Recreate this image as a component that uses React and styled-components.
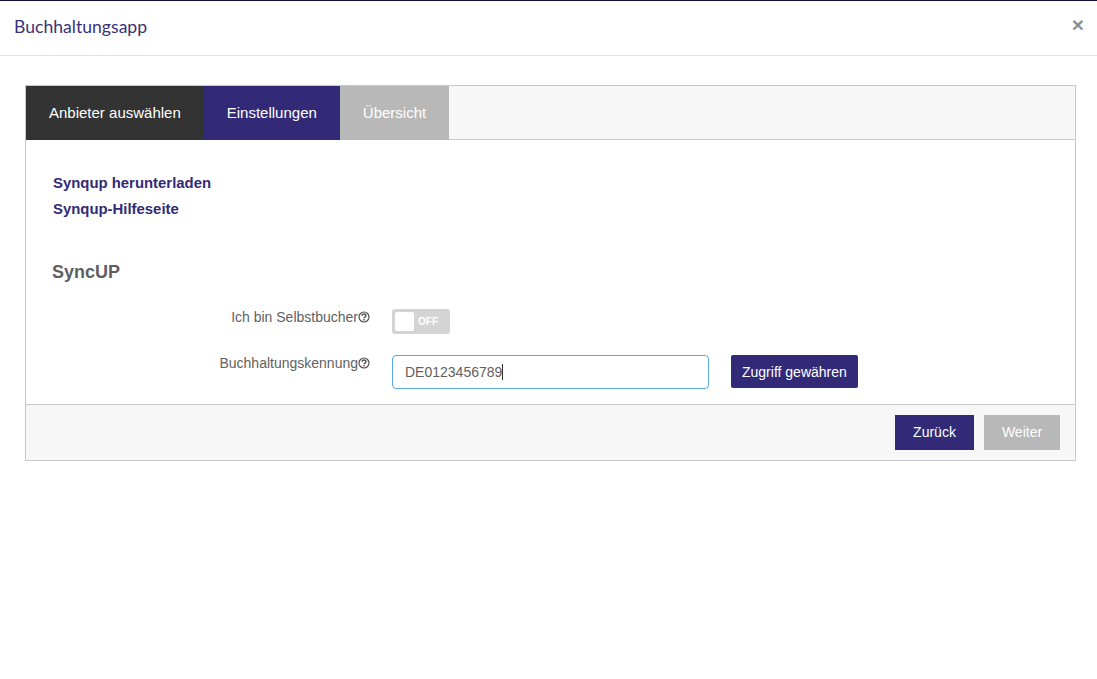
import React from "react";
import styled, { createGlobalStyle } from "styled-components";

const GlobalStyle = createGlobalStyle`
  html, body {
    margin: 0;
    padding: 0;
    background: #fff;
    font-family: "Liberation Sans", Arial, sans-serif;
  }
  * {
    box-sizing: border-box;
  }
`;

const Page = styled.div`
  width: 100%;
  height: 679px;
  overflow: hidden;
  border-top: 1px solid #14103a;
  background: #fff;
`;

const ModalHeader = styled.header`
  height: 55px;
  padding: 0 14px;
  display: flex;
  align-items: center;
  justify-content: space-between;
  border-bottom: 1px solid #e5e5e5;
`;

const ModalTitle = styled.h4`
  margin: 0 0 3px;
  font-family: Lato, sans-serif;
  font-size: 17.6px;
  font-weight: 400;
  color: #3a3278;
`;

const CloseButton = styled.span`
  font-family: "Liberation Sans", Arial, sans-serif;
  font-size: 21px;
  font-weight: 700;
  line-height: 1;
  color: #8f8f8f;
  margin: 0 -1px 8px 0;
`;

const ModalBody = styled.div`
  padding: 29px 21px 0 25px;
`;

const Wizard = styled.section`
  border: 1px solid #c8c8c8;
`;

const TabBar = styled.nav`
  display: flex;
  height: 54px;
  background: #f7f7f7;
  border-bottom: 1px solid #c8c8c8;
`;

const Tab = styled.div`
  display: flex;
  align-items: center;
  margin-bottom: -1px;
  padding: 0 23px 1px;
  font-size: 15px;
  color: #fff;
  background: ${(p) => p.$bg};
`;

const Content = styled.div`
  padding: 30px 27px 0 27px;
  height: 264px;
`;

const DocLink = styled.a`
  display: block;
  font-size: 14.9px;
  font-weight: 700;
  line-height: 26px;
  color: #332a77;
`;

const SectionTitle = styled.h3`
  margin: 40px 0 27px -1px;
  font-size: 18px;
  font-weight: 700;
  line-height: 20px;
  color: #5f5f5f;
`;

const FormRow = styled.div`
  display: flex;
  align-items: flex-start;
  margin-bottom: ${(p) => p.$gap}px;
`;

const Label = styled.label`
  width: 317px;
  flex: none;
  display: flex;
  justify-content: flex-end;
  align-items: center;
  height: 16px;
  font-size: 14px;
  color: #5f5f5f;
`;

const HelpIcon = styled.svg`
  width: 12px;
  height: 12px;
  flex: none;
`;

const Toggle = styled.div`
  margin-left: 22px;
  width: 58px;
  height: 25px;
  padding: 3px;
  border-radius: 3px;
  background: #d4d4d4;
  display: flex;
  align-items: center;
  gap: 4px;
`;

const ToggleKnob = styled.span`
  width: 19px;
  height: 19px;
  border-radius: 2px;
  background: #fff;
`;

const ToggleText = styled.span`
  font-size: 10px;
  font-weight: 700;
  color: #fff;
`;

const TextField = styled.div`
  margin-left: 22px;
  width: 317px;
  height: 34px;
  padding: 0 12px;
  display: flex;
  align-items: center;
  border: 1px solid #5aa9e6;
  border-radius: 4px;
  font-size: 14px;
  color: #5f5f5f;
`;

const Caret = styled.span`
  width: 1px;
  height: 16px;
  background: #333;
`;

const GrantButton = styled.button`
  margin-left: 22px;
  height: 33px;
  padding: 0 11px;
  border: 0;
  border-radius: 2px;
  background: #332a77;
  color: #fff;
  font-family: inherit;
  font-size: 14px;
`;

const Footer = styled.footer`
  height: 56px;
  padding: 10px 15px 0 0;
  display: flex;
  justify-content: flex-end;
  gap: 10px;
  background: #f7f7f7;
  border-top: 1px solid #c8c8c8;
`;

const FooterButton = styled.button`
  width: ${(p) => p.$w}px;
  height: 35px;
  padding: 0 0 2px;
  border: 0;
  background: ${(p) => (p.disabled ? "#b8b8b8" : "#332a77")};
  color: #fff;
  font-family: inherit;
  font-size: 14px;
`;

const Help = () => (
  <HelpIcon viewBox="0 0 12 12" fill="none" stroke="#4f4f4f">
    <circle cx="6" cy="6" r="5" strokeWidth="1.2" />
    <path d="M4.1 4.8c0-2.4 3.8-2.4 3.8-.1 0 1.4-1.9 1.3-1.9 2.6" strokeWidth="1.4" />
    <path d="M6 8.1v1.3" strokeWidth="1.4" />
  </HelpIcon>
);

export default function App() {
  return (
    <>
      <GlobalStyle />
      <Page>
        <ModalHeader>
          <ModalTitle>Buchhaltungsapp</ModalTitle>
          <CloseButton>×</CloseButton>
        </ModalHeader>
        <ModalBody>
          <Wizard>
            <TabBar>
              <Tab $bg="#333333">Anbieter auswählen</Tab>
              <Tab $bg="#332a77">Einstellungen</Tab>
              <Tab $bg="#b8b8b8">Übersicht</Tab>
            </TabBar>
            <Content>
              <DocLink>Synqup herunterladen</DocLink>
              <DocLink>Synqup-Hilfeseite</DocLink>
              <SectionTitle>SyncUP</SectionTitle>
              <FormRow $gap={21}>
                <Label>
                  Ich bin Selbstbucher
                  <Help />
                </Label>
                <Toggle>
                  <ToggleKnob />
                  <ToggleText>OFF</ToggleText>
                </Toggle>
              </FormRow>
              <FormRow $gap={0}>
                <Label>
                  Buchhaltungskennung
                  <Help />
                </Label>
                <TextField>
                  DE0123456789
                  <Caret />
                </TextField>
                <GrantButton>Zugriff gewähren</GrantButton>
              </FormRow>
            </Content>
            <Footer>
              <FooterButton $w={79}>Zurück</FooterButton>
              <FooterButton $w={76} disabled>
                Weiter
              </FooterButton>
            </Footer>
          </Wizard>
        </ModalBody>
      </Page>
    </>
  );
}
